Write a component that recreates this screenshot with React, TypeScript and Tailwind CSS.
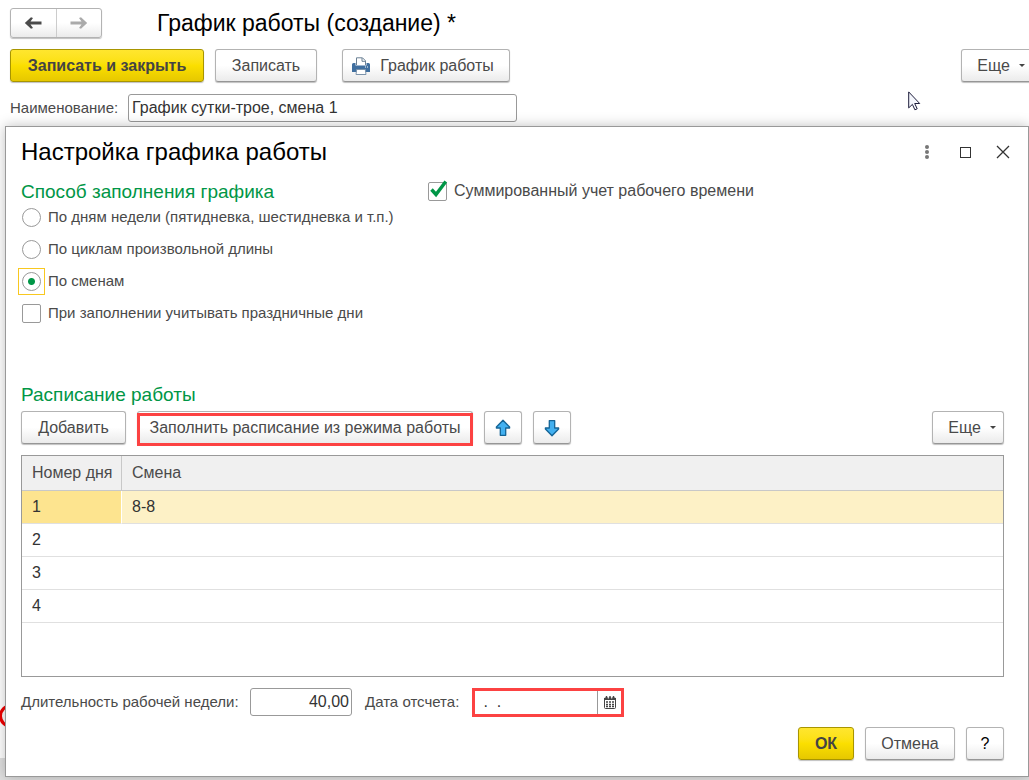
import { useState } from "react";
import type { ReactNode } from "react";
import clsx from "clsx";

type ButtonProps = {
  children: ReactNode;
  primary?: boolean;
  className?: string;
  label?: string;
};

const Button = ({ children, primary, className, label }: ButtonProps) => (
  <button
    type="button"
    aria-label={label}
    className={clsx(
      "flex h-[33px] shrink-0 items-center justify-center rounded-[3px] border whitespace-nowrap",
      primary
        ? "border-[#a89500] bg-linear-to-b from-[#ffe62e] via-[#fbdf00] to-[#e6c800] font-bold text-[#444]"
        : "border-[#b3b3b3] border-b-[#969696] bg-linear-to-b from-white from-50% to-[#ebebeb] text-[#4a4a4a]",
      "shadow-[0_1px_1px_rgba(0,0,0,0.25)]",
      className
    )}
  >
    {children}
  </button>
);

const Caret = () => (
  <svg width="6" height="3" viewBox="0 0 6 3" aria-hidden="true">
    <path d="M0 0h6L3 3z" fill="#444" />
  </svg>
);

const NavArrow = ({ className }: { className?: string }) => (
  <svg
    width="18"
    height="12"
    viewBox="0 0 18 12"
    className={className}
    aria-hidden="true"
  >
    <path
      d="M17.5 4.500v3H6.500l2.500 3.500-2 .8L.8 6 7 .2 9 1 6.500 4.500z"
      fill="currentColor"
    />
  </svg>
);

const BlueArrow = ({ className }: { className?: string }) => (
  <svg
    width="16"
    height="18"
    viewBox="0 0 16 18"
    className={className}
    aria-hidden="true"
  >
    <path
      d="M8 1.2 14.6 8v1H10.7v7.3H5.3V9H1.4V8z"
      fill="#42b0f0"
      stroke="#146496"
      strokeWidth="1.3"
      strokeLinejoin="round"
    />
  </svg>
);

const PrinterIcon = () => (
  <svg width="18" height="18" viewBox="0 0 18 18" aria-hidden="true">
    <path d="M4.5 8V.8h6l3 3V8" fill="#fff" stroke="#6b8094" />
    <path d="M10 1v3.3h3.5" fill="none" stroke="#6b8094" />
    <path
      d="M1.5 6h2v2.500h11V6h2A1.500 1.500 0 0 1 18 7.500V15H0V7.500A1.500 1.500 0 0 1 1.500 6z"
      fill="#406f9f"
    />
    <path d="M13 10h1M15 10h1" stroke="#fff" />
    <path d="M4.700 12.500h8.600l.7 5H4z" fill="#fff" stroke="#7c93aa" />
  </svg>
);

const CalendarIcon = () => (
  <svg width="12" height="13" viewBox="0 0 12 13" aria-hidden="true">
    <rect x=".5" y="2" width="11" height="10.500" rx="1" fill="#fff" stroke="#444" />
    <path d="M0 1.500h12V4H0z" fill="#444" />
    <path d="M2.500 0v3M6 0v3M9.500 0v3" stroke="#444" strokeWidth="1.400" />
    <path d="M4.300 1v1.500M7.700 1v1.500M.7 1v1M11.300 1v1" stroke="#fff" />
    <path
      d="M2 6h2M5 6h2M8 6h2M2 8.500h2M5 8.500h2M8 8.500h2M2 10.500h2M5 10.500h2M8 10.500h2"
      stroke="#444"
      strokeWidth="1.300"
    />
  </svg>
);

const Cursor = () => (
  <svg
    width="13"
    height="20"
    viewBox="0 0 13 20"
    className="absolute top-[91px] left-[908px]"
    aria-hidden="true"
  >
    <path
      d="M.7.900v16l3.700-3.500 2.500 5.400 2.300-1-2.500-5.300h5z"
      fill="#f4f6fc"
      stroke="#1d1d3c"
    />
  </svg>
);

const methods = [
  { id: "week", label: "По дням недели (пятидневка, шестидневка и т.п.)" },
  { id: "cycle", label: "По циклам произвольной длины" },
  { id: "shift", label: "По сменам" },
];

const days = [
  { number: 1, shift: "8-8" },
  { number: 2, shift: "" },
  { number: 3, shift: "" },
  { number: 4, shift: "" },
];

type CheckboxProps = {
  label: string;
  checked: boolean;
  onChange: (checked: boolean) => void;
};

const Checkbox = ({ label, checked, onChange }: CheckboxProps) => (
  <label className="flex h-8 items-center gap-[7px]">
    <span className="relative size-[19px]">
      <input
        type="checkbox"
        checked={checked}
        onChange={(e) => onChange(e.target.checked)}
        className="block size-[19px] appearance-none rounded-[2px] border border-[#999] bg-white"
      />
      {checked && (
        <svg
          width="19"
          height="19"
          viewBox="0 0 19 19"
          className="pointer-events-none absolute inset-0 overflow-visible"
          aria-hidden="true"
        >
          <path
            d="M3.500 7.500 8 12.500 17.800-.5"
            fill="none"
            stroke="#009646"
            strokeWidth="3.400"
          />
        </svg>
      )}
    </span>
    {label}
  </label>
);

const ScheduleDialog = () => {
  const [method, setMethod] = useState("shift");
  const [holidays, setHolidays] = useState(false);
  const [summed, setSummed] = useState(true);
  const [selected, setSelected] = useState(1);
  const [hours, setHours] = useState("40,00");
  const [date, setDate] = useState(" .  .");

  return (
    <section
      role="dialog"
      aria-labelledby="dialog-title"
      className="relative mb-[3px] ml-[5px] flex flex-1 flex-col border border-[#999] bg-white pr-6 pb-4 pl-[15px] shadow-[0_0_12px_rgba(0,0,0,0.25)]"
    >
      <header className="-mr-[6px] flex h-[50px] items-center">
        <h2 id="dialog-title" className="flex-1 text-2xl text-black">
          Настройка графика работы
        </h2>
        <div className="flex items-center gap-[25px]">
          <button type="button" aria-label="Меню" className="flex w-3 justify-center">
            <svg width="4" height="14" viewBox="0 0 4 14" fill="#777">
              <circle cx="2" cy="2" r="2" />
              <circle cx="2" cy="7" r="2" />
              <circle cx="2" cy="12" r="2" />
            </svg>
          </button>
          <button
            type="button"
            aria-label="Развернуть"
            className="ml-[2px] size-[11px] border border-[#333]"
          />
          <button type="button" aria-label="Закрыть">
            <svg width="14" height="14" viewBox="0 0 14 14">
              <path d="m1 1 12 12M13 1 1 13" stroke="#333" strokeWidth="1.300" />
            </svg>
          </button>
        </div>
      </header>

      <div className="flex items-start">
        <fieldset className="w-[407px] text-[15px]">
          <legend className="h-6 text-[19px] leading-[30px] text-[#009646]">
            Способ заполнения графика
          </legend>
          <div className="pl-px">
            {methods.map((item) => (
              <label key={item.id} className="flex h-8 items-center gap-[7px]">
                <span
                  className={clsx(
                    "size-[19px]",
                    method === item.id && "outline-1 outline-offset-3 outline-[#f8c820]"
                  )}
                >
                  <input
                    type="radio"
                    name="method"
                    checked={method === item.id}
                    onChange={() => setMethod(item.id)}
                    className="block size-[19px] appearance-none rounded-full border border-[#999] bg-white checked:bg-[radial-gradient(circle,#009646_3px,transparent_4px)]"
                  />
                </span>
                {item.label}
              </label>
            ))}
            <Checkbox
              label="При заполнении учитывать праздничные дни"
              checked={holidays}
              onChange={setHolidays}
            />
          </div>
        </fieldset>
        <div className="-mt-[2px]">
          <Checkbox
            label="Суммированный учет рабочего времени"
            checked={summed}
            onChange={setSummed}
          />
        </div>
      </div>

      <h3 className="mt-[52px] text-[19px] leading-7 text-[#009646]">Расписание работы</h3>
      <div className="mt-[2px] flex">
        <Button className="w-[105px]">Добавить</Button>
        <div className="relative ml-[11px]">
          <Button className="w-[336px]">Заполнить расписание из режима работы</Button>
          <span className="pointer-events-none absolute inset-x-0 top-[2px] -bottom-[2px] border-3 border-[#fc4242]" />
        </div>
        <Button className="ml-[11px] w-[38px]" label="Переместить вверх">
          <BlueArrow />
        </Button>
        <Button className="ml-[11px] w-[38px]" label="Переместить вниз">
          <BlueArrow className="rotate-180" />
        </Button>
        <Button className="ml-auto w-[72px] gap-[9px] pl-2">
          Еще <Caret />
        </Button>
      </div>

      <div className="mt-[11px] min-h-[222px] flex-1 border border-[#999]">
        <table className="w-full table-fixed border-separate border-spacing-0 text-left">
          <thead>
            <tr className="h-[35px] bg-[#f0f0f0]">
              <th className="w-[100px] border-r border-b border-[#c8c8c8] pl-[10px] font-normal whitespace-nowrap">
                Номер дня
              </th>
              <th className="border-b border-[#c8c8c8] pl-[10px] font-normal">Смена</th>
            </tr>
          </thead>
          <tbody className="text-[#333]">
            {days.map((day) => {
              const active = day.number === selected;
              return (
                <tr
                  key={day.number}
                  onClick={() => setSelected(day.number)}
                  className="h-[33px]"
                >
                  <td
                    className={clsx(
                      "border-b border-[#e0e0e0] pl-[10px]",
                      active && "border-r border-r-white bg-[#fde48f]"
                    )}
                  >
                    {day.number}
                  </td>
                  <td
                    className={clsx(
                      "border-b border-[#e0e0e0] pl-[10px]",
                      active && "bg-[#fdf1c6]"
                    )}
                  >
                    {day.shift}
                  </td>
                </tr>
              );
            })}
          </tbody>
        </table>
      </div>

      <div className="mt-[11px] flex h-7 items-center">
        <label htmlFor="hours" className="w-[229px] text-[15px]">
          Длительность рабочей недели:
        </label>
        <input
          id="hours"
          value={hours}
          onChange={(e) => setHours(e.target.value)}
          className="h-7 w-[102px] rounded-[3px] border border-[#999] pr-[2px] text-right text-[#333]"
        />
        <label htmlFor="start-date" className="ml-[13px] w-[107px] text-[15px]">
          Дата отсчета:
        </label>
        <div className="flex h-[29px] w-[152px] border-3 border-[#fc4242]">
          <input
            id="start-date"
            value={date}
            onChange={(e) => setDate(e.target.value)}
            className="min-w-0 flex-1 pl-1 text-[#333]"
          />
          <button
            type="button"
            aria-label="Выбрать дату"
            className="flex w-6 items-center justify-center border-l border-[#999]"
          >
            <CalendarIcon />
          </button>
        </div>
      </div>

      <footer className="mt-[11px] flex justify-end gap-[11px]">
        <Button primary className="w-14">ОК</Button>
        <Button className="w-[90px]">Отмена</Button>
        <Button className="w-[38px] text-black">?</Button>
      </footer>
    </section>
  );
};

const App = () => {
  const [name, setName] = useState("График сутки-трое, смена 1");

  return (
    <main className="relative flex min-h-screen flex-col overflow-hidden bg-white font-['Liberation_Sans',Arial,sans-serif] text-base text-[#4a4a4a]">
      <div className="flex h-[49px] items-center pb-[3px] pl-[10px]">
        <div className="flex h-[30px] w-[92px] rounded-[3px] border border-[#b3b3b3] bg-linear-to-b from-white from-50% to-[#ebebeb] shadow-[0_1px_1px_rgba(0,0,0,0.25)]">
          <button
            type="button"
            aria-label="Назад"
            className="flex flex-1 items-center justify-center border-r border-[#ccc] text-[#4a4a4a]"
          >
            <NavArrow />
          </button>
          <button
            type="button"
            aria-label="Вперед"
            className="flex flex-1 items-center justify-center text-[#aaa]"
          >
            <NavArrow className="rotate-180" />
          </button>
        </div>
        <h1 className="ml-[55px] text-[23px] text-black">График работы (создание) *</h1>
      </div>

      <div className="-mr-1 flex pl-[10px]">
        <Button primary className="w-[194px]">Записать и закрыть</Button>
        <Button className="ml-[11px] w-[102px]">Записать</Button>
        <Button className="ml-[25px] w-[168px] gap-[10px] pr-[6px]">
          <PrinterIcon />
          График работы
        </Button>
        <Button className="ml-auto w-[72px] gap-[9px] pl-2">
          Еще <Caret />
        </Button>
      </div>

      <div className="mt-3 mb-1 flex items-center pl-[10px]">
        <label htmlFor="name" className="w-[118px] text-[15px]">
          Наименование:
        </label>
        <input
          id="name"
          value={name}
          onChange={(e) => setName(e.target.value)}
          className="h-7 w-[389px] rounded-[3px] border border-[#999] pl-[3px] text-[#333]"
        />
      </div>

      <div className="absolute inset-x-0 bottom-0 h-[22px] bg-[#e0e0e0]" />
      <svg
        width="24"
        height="24"
        viewBox="0 0 24 24"
        className="absolute bottom-[52px] -left-[1px]"
        aria-hidden="true"
      >
        <circle cx="12" cy="12" r="10.500" fill="#fff" stroke="#f00000" strokeWidth="3" />
      </svg>
      <ScheduleDialog />
      <Cursor />
    </main>
  );
};

export default App;
